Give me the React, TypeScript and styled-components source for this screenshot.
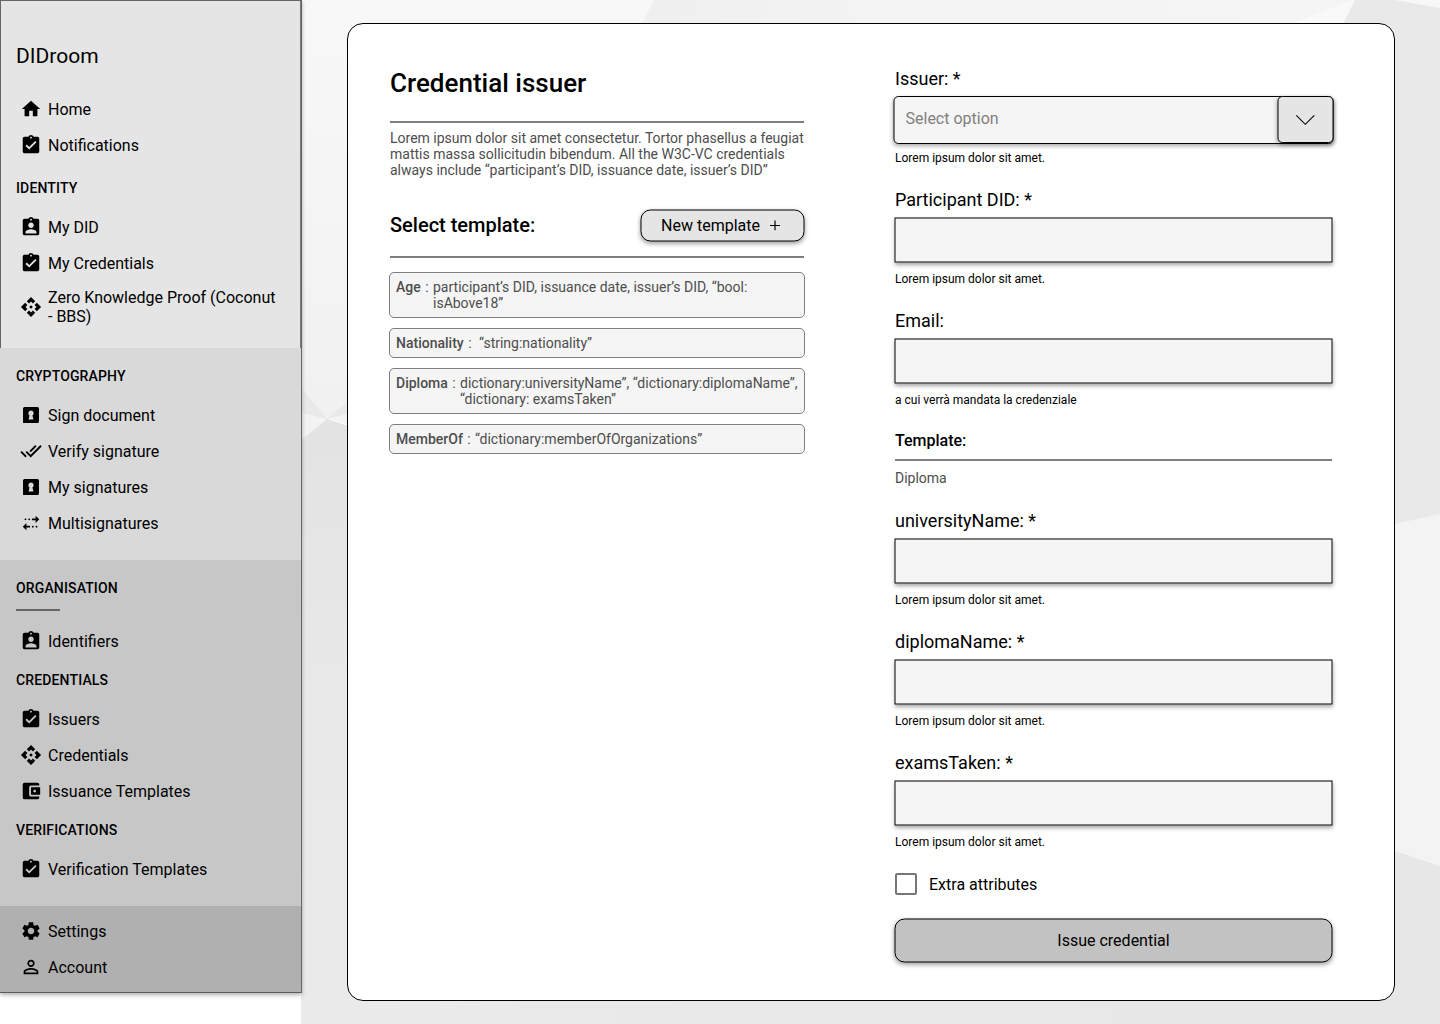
import React from "react";
import styled, { createGlobalStyle } from "styled-components";
import {
  MdHome,
  MdAssignmentTurnedIn,
  MdAssignmentInd,
  MdApi,
  MdDoneAll,
  MdMultipleStop,
  MdAccountBalanceWallet,
  MdSettings,
  MdPersonOutline,
} from "react-icons/md";

const GlobalStyle = createGlobalStyle`
  * { box-sizing: border-box; }
  body {
    margin: 0;
    background: #fff;
    color: #000;
    font-family: Roboto, "Liberation Sans", sans-serif;
  }
  button, input { font-family: inherit; }
`;

const Page = styled.div`
  display: flex;
  align-items: flex-start;
  height: 1024px;
  overflow: hidden;
`;

/* Sidebar */

const Sidebar = styled.nav`
  position: relative;
  z-index: 1;
  flex: none;
  width: 302px;
  height: 993px;
  margin-right: -1px;
  border-right: 1px solid #666;
  border-bottom: 1px solid #5c5c5c;
  box-shadow: 0 2px 4px rgba(0, 0, 0, 0.3);
`;

const Section = styled.section<{ $tone: string; $height: number; $outlined?: boolean; $top?: number }>`
  height: ${(p) => p.$height}px;
  padding-top: ${(p) => p.$top ?? 7}px;
  background: ${(p) => p.$tone};
  box-shadow: ${(p) => (p.$outlined ? "inset 1px 1px 0 #666, inset -1px 0 0 #777" : "none")};
`;

const Brand = styled.div`
  height: 50px;
  padding-left: 16px;
  font-size: 21px;
  line-height: 30px;
`;

const GroupTitle = styled.h3<{ $offset?: number }>`
  margin: ${(p) => p.$offset ?? 0}px 0 0 16px;
  font-size: 14px;
  font-weight: 500;
  line-height: 42px;
  letter-spacing: 0.14px;
`;

const ShortRule = styled.div`
  width: 44px;
  height: 2px;
  margin: 0 0 12px 16px;
  background: #666;
`;

const Item = styled.a<{ $tall?: boolean }>`
  display: flex;
  align-items: center;
  gap: 6px;
  height: ${(p) => (p.$tall ? 52 : 36)}px;
  padding: 0 20px;
  font-size: 16px;
  line-height: 19px;
  svg { flex: none; }
`;

const KeyholeIcon = ({ size = 22 }: { size?: number }) => (
  <svg width={size} height={size} viewBox="0 0 24 24">
    <path
      fillRule="evenodd"
      d="M5 3.3h14a1.7 1.7 0 0 1 1.7 1.7v14a1.7 1.7 0 0 1-1.7 1.7H3.3V5A1.7 1.7 0 0 1 5 3.3zM12 7a3 3 0 0 0-1.6 5.5L9.3 17h5.4l-1.1-4.5A3 3 0 0 0 12 7z"
    />
  </svg>
);

type Entry = { icon: React.ComponentType<{ size?: number }>; label: string; tall?: boolean };

const Items = ({ entries }: { entries: Entry[] }) => (
  <>
    {entries.map(({ icon: Icon, label, tall }) => (
      <Item key={label} $tall={tall}>
        <Icon size={22} />
        <span>{label}</span>
      </Item>
    ))}
  </>
);

/* Main area */

const Main = styled.main`
  position: relative;
  flex: 1;
  height: 1024px;
  padding: 23px 45px 23px 46px;
`;

const Backdrop = styled.svg`
  position: absolute;
  inset: 0;
  width: 100%;
  height: 100%;
`;

const Card = styled.div`
  position: relative;
  display: flex;
  justify-content: space-between;
  width: 1048px;
  height: 978px;
  padding: 45px 62px 0 42px;
  border: 1px solid #000;
  border-radius: 16px;
  background: #fff;
`;

const Rule = styled.div`
  height: 2px;
  background: #7f7f7f;
`;

const TemplateColumn = styled.section`
  width: 414px;
  margin-top: -1px;
`;

const Title = styled.h1`
  margin: 0 0 23px;
  font-size: 26px;
  font-weight: 500;
  line-height: 30px;
`;

const Intro = styled.p`
  margin: 7px -4px 0 0;
  color: #4d4d4d;
  font-size: 14px;
  line-height: 16px;
`;

const TemplateHeader = styled.div`
  display: flex;
  align-items: flex-start;
  justify-content: space-between;
  margin: 31px 0 15px;
`;

const Subtitle = styled.h2`
  margin: 4px 0 0;
  font-size: 20px;
  font-weight: 500;
  line-height: 24px;
`;

const Button = styled.button<{ $tone: string; $width: number; $height: number }>`
  display: flex;
  align-items: center;
  justify-content: center;
  gap: 10px;
  width: ${(p) => p.$width}px;
  height: ${(p) => p.$height}px;
  padding: 0 0 2px;
  border: 1px solid #000;
  border-radius: 10px;
  background: ${(p) => p.$tone};
  box-shadow: 0 2px 4px rgba(0, 0, 0, 0.35);
  color: #000;
  font-size: 16px;
  transform: translate(0.5px, 0.5px);
  svg { margin-right: 2px; }
`;

const TemplateList = styled.div`
  display: flex;
  flex-direction: column;
  gap: 10px;
  margin: 14px -1px 0;
`;

const TemplateRow = styled.div`
  display: flex;
  padding: 6px 0 6px 6px;
  border: 1px solid #7f7f7f;
  border-radius: 5px;
  background: #f5f5f5;
  color: #4d4d4d;
  font-size: 14px;
  line-height: 16px;
`;

const TemplateName = styled.div<{ $width: number }>`
  flex: none;
  width: ${(p) => p.$width}px;
  white-space: nowrap;
  b {
    margin-right: 1px;
    font-weight: 500;
  }
`;

const TemplateValue = styled.div`
  white-space: pre-line;
`;

const FormColumn = styled.form`
  width: 439px;
  margin-right: -1px;
`;

const Field = styled.div`
  margin-bottom: 25px;
`;

const Label = styled.label`
  display: block;
  margin: 0 0 7px 1px;
  font-size: 18px;
  line-height: 20px;
`;

const Hint = styled.div<{ $gap?: number }>`
  margin: ${(p) => p.$gap ?? 10}px 0 0 1px;
  font-size: 12px;
  line-height: 14px;
`;

const TextInput = styled.input`
  display: block;
  width: 438px;
  height: 45px;
  border: 1px solid #000;
  border-radius: 0;
  background: #f5f5f5;
  box-shadow: 0 2px 4px rgba(0, 0, 0, 0.35);
  outline: none;
  transform: translate(0.5px, 0.5px);
`;

const Select = styled.div`
  display: flex;
  justify-content: space-between;
  width: 440px;
  height: 48px;
  margin-left: -1px;
  padding-left: 11px;
  border: 1px solid #000;
  border-radius: 5px;
  background: #f5f5f5;
  box-shadow: 0 2px 4px rgba(0, 0, 0, 0.35);
  color: #808080;
  font-size: 16px;
  line-height: 44px;
  transform: translateX(0.5px);
`;

const SelectToggle = styled.div`
  display: flex;
  align-items: center;
  justify-content: center;
  width: 56px;
  height: 47px;
  margin: -1px -1px 0 0;
  border: 1px solid #000;
  border-radius: 5px;
  background: #e5e5e5;
  box-shadow: 0 2px 4px rgba(0, 0, 0, 0.35);
`;

const ChosenTemplate = styled.div`
  margin: -1px 1px 25px;
`;

const ChosenTitle = styled.h3`
  margin: 0 0 8px;
  font-size: 16px;
  font-weight: 500;
  line-height: 20px;
`;

const ChosenName = styled.div`
  margin-top: 9px;
  color: #4d4d4d;
  font-size: 14px;
  line-height: 16px;
`;

const CheckRow = styled.label`
  display: flex;
  align-items: center;
  gap: 12px;
  height: 22px;
  margin: -1px 0 23px 1px;
  font-size: 16px;
`;

const CheckBox = styled.span`
  width: 22px;
  height: 22px;
  border: 2px solid #777;
  border-radius: 2px;
`;

const templates = [
  { name: "Age", width: 37, value: "participant’s DID, issuance date, issuer’s DID, “bool:\nisAbove18”" },
  { name: "Nationality", width: 83, value: "“string:nationality”" },
  { name: "Diploma", width: 64, value: "dictionary:universityName”, “dictionary:diplomaName”,\n“dictionary: examsTaken”" },
  { name: "MemberOf", width: 79, value: "“dictionary:memberOfOrganizations”" },
];

const TextField = ({ label, hint = "Lorem ipsum dolor sit amet." }: { label: string; hint?: string }) => (
  <Field>
    <Label>{label}</Label>
    <TextInput />
    <Hint>{hint}</Hint>
  </Field>
);

export default function App() {
  return (
    <Page>
      <GlobalStyle />
      <Sidebar>
        <Section $tone="#e5e5e5" $height={348} $top={41} $outlined>
          <Brand>DIDroom</Brand>
          <Items
            entries={[
              { icon: MdHome, label: "Home" },
              { icon: MdAssignmentTurnedIn, label: "Notifications" },
            ]}
          />
          <GroupTitle $offset={4}>IDENTITY</GroupTitle>
          <Items
            entries={[
              { icon: MdAssignmentInd, label: "My DID" },
              { icon: MdAssignmentTurnedIn, label: "My Credentials" },
              { icon: MdApi, label: "Zero Knowledge Proof (Coconut - BBS)", tall: true },
            ]}
          />
        </Section>
        <Section $tone="#d9d9d9" $height={212}>
          <GroupTitle>CRYPTOGRAPHY</GroupTitle>
          <Items
            entries={[
              { icon: KeyholeIcon, label: "Sign document" },
              { icon: MdDoneAll, label: "Verify signature" },
              { icon: KeyholeIcon, label: "My signatures" },
              { icon: MdMultipleStop, label: "Multisignatures" },
            ]}
          />
        </Section>
        <Section $tone="#c7c7c7" $height={346}>
          <GroupTitle>ORGANISATION</GroupTitle>
          <ShortRule />
          <Items entries={[{ icon: MdAssignmentInd, label: "Identifiers" }]} />
          <GroupTitle>CREDENTIALS</GroupTitle>
          <Items
            entries={[
              { icon: MdAssignmentTurnedIn, label: "Issuers" },
              { icon: MdApi, label: "Credentials" },
              { icon: MdAccountBalanceWallet, label: "Issuance Templates" },
            ]}
          />
          <GroupTitle>VERIFICATIONS</GroupTitle>
          <Items entries={[{ icon: MdAssignmentTurnedIn, label: "Verification Templates" }]} />
        </Section>
        <Section $tone="#b0b0b0" $height={86}>
          <Items
            entries={[
              { icon: MdSettings, label: "Settings" },
              { icon: MdPersonOutline, label: "Account" },
            ]}
          />
        </Section>
      </Sidebar>

      <Main>
        <Backdrop viewBox="0 0 1139 1024" preserveAspectRatio="none">
          <defs>
            <linearGradient id="sky" x1="0" y1="0" x2="0" y2="1">
              <stop offset="0" stopColor="#f8f8f8" />
              <stop offset="1" stopColor="#f1f1f1" />
            </linearGradient>
            <linearGradient id="floor" x1="0" y1="0" x2="0" y2="1">
              <stop offset="0" stopColor="#e3e3e3" />
              <stop offset="0.5" stopColor="#e9e9e9" />
              <stop offset="1" stopColor="#eaeaea" />
            </linearGradient>
            <linearGradient id="band" x1="0" y1="0" x2="1" y2="0">
              <stop offset="0" stopColor="#efefef" />
              <stop offset="0.3" stopColor="#f3f3f3" />
              <stop offset="1" stopColor="#f5f5f5" />
            </linearGradient>
            <linearGradient id="base" x1="0" y1="0" x2="1" y2="0">
              <stop offset="0" stopColor="#eaeaea" />
              <stop offset="1" stopColor="#e7e7e7" />
            </linearGradient>
          </defs>
          <rect width="1139" height="420" fill="url(#sky)" />
          <path d="M353 0H1052L1035 23V40H332z" fill="url(#band)" />
          <path d="M1052 0L992 23V40H1034z" fill="#f9f9f9" />
          <path d="M1054 0H1139V530H1090L1060 60L1034 40z" fill="#e9e9e9" />
          <path d="M1094 0H1139V8z" fill="#f8f8f8" />
          <path d="M0 388L26 419L0 413zM26 419L60 390V410z" fill="#e9e9e9" />
          <path d="M0 413L26 419L0 440zM26 419L60 411V428z" fill="#f3f3f3" />
          <path d="M0 440L26 419L60 430V1024H0z" fill="url(#floor)" />
          <path d="M50 970H1139V1024H50z" fill="url(#base)" />
          <path d="M1080 527L1139 514V866L1080 846z" fill="#f3f3f3" />
          <path d="M1080 846L1139 866V1024H1080z" fill="#e7e7e7" />
        </Backdrop>
        <Card>
          <TemplateColumn>
            <Title>Credential issuer</Title>
            <Rule />
            <Intro>
              Lorem ipsum dolor sit amet consectetur. Tortor phasellus a feugiat mattis massa sollicitudin bibendum. All
              the W3C-VC credentials always include “participant’s DID, issuance date, issuer’s DID”
            </Intro>
            <TemplateHeader>
              <Subtitle>Select template:</Subtitle>
              <Button type="button" $tone="#e5e5e5" $width={164} $height={32}>
                New template
                <svg width="12" height="12" viewBox="0 0 12 12" stroke="#000" strokeWidth="1.2">
                  <path d="M5.5 2v10M.5 7h10" />
                </svg>
              </Button>
            </TemplateHeader>
            <Rule />
            <TemplateList>
              {templates.map((t) => (
                <TemplateRow key={t.name}>
                  <TemplateName $width={t.width}>
                    <b>{t.name}</b> :
                  </TemplateName>
                  <TemplateValue>{t.value}</TemplateValue>
                </TemplateRow>
              ))}
            </TemplateList>
          </TemplateColumn>

          <FormColumn>
            <Field>
              <Label>Issuer: *</Label>
              <Select>
                <span>Select option</span>
                <SelectToggle>
                  <svg width="20" height="12" viewBox="0 0 20 12" fill="none" stroke="#000" strokeWidth="1.1">
                    <path d="M.8 1.3l9 9 9-9" />
                  </svg>
                </SelectToggle>
              </Select>
              <Hint $gap={7}>Lorem ipsum dolor sit amet.</Hint>
            </Field>
            <TextField label="Participant DID: *" />
            <TextField label="Email:" hint="a cui verrà mandata la credenziale" />
            <ChosenTemplate>
              <ChosenTitle>Template:</ChosenTitle>
              <Rule />
              <ChosenName>Diploma</ChosenName>
            </ChosenTemplate>
            <TextField label="universityName: *" />
            <TextField label="diplomaName: *" />
            <TextField label="examsTaken: *" />
            <CheckRow>
              <CheckBox />
              Extra attributes
            </CheckRow>
            <Button type="button" $tone="#c2c2c2" $width={438} $height={44}>
              Issue credential
            </Button>
          </FormColumn>
        </Card>
      </Main>
    </Page>
  );
}
